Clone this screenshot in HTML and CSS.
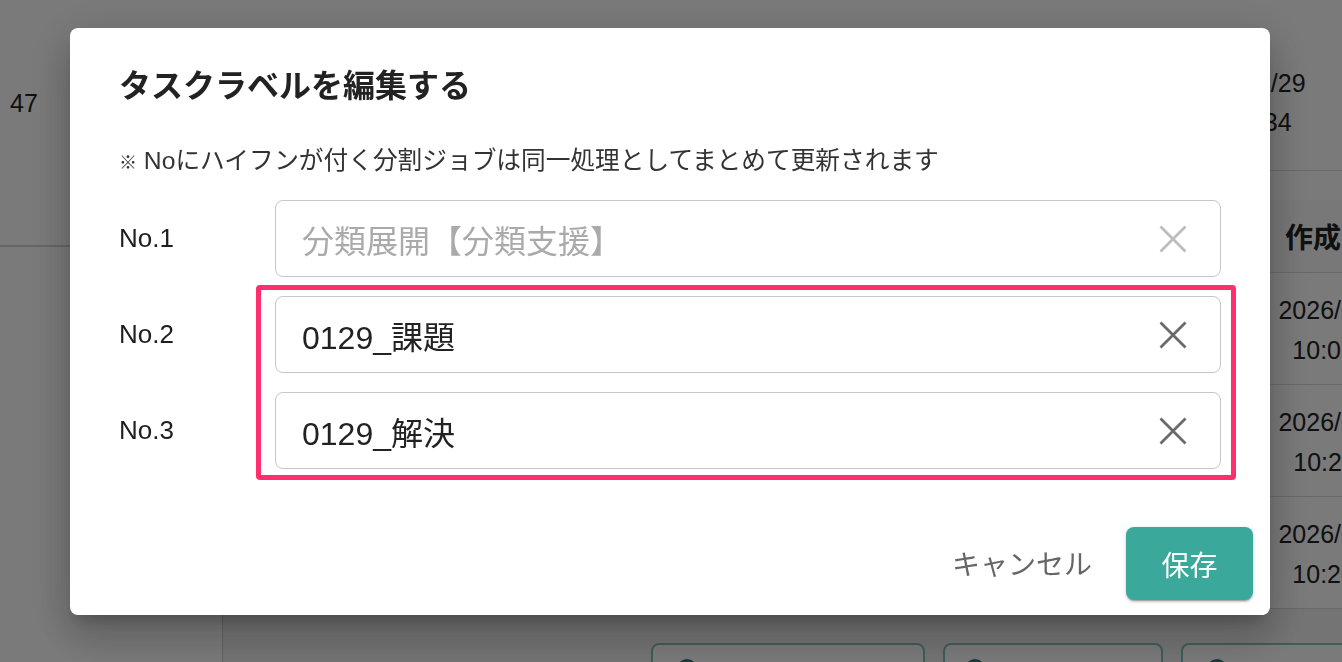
FILE: index.html
```html
<!DOCTYPE html>
<html lang="ja">
<head>
<meta charset="utf-8">
<title>タスクラベルを編集する</title>
<link rel="stylesheet" href="styles.css">
</head>
<body>
<div class="app">
  <aside class="sidebar">
    <div class="side-count">47</div>
    <div class="side-divider"></div>
  </aside>
  <main class="main">
    <section class="info">
      <div class="info-col">
        <div>2026/01/29</div>
        <div>10:05:34</div>
      </div>
    </section>
    <section class="table">
      <div class="table-toolbar"></div>
      <div class="trow thead">
        <div class="cell"></div>
        <div class="cell date-cell">作成日時</div>
      </div>
      <div class="trow">
        <div class="cell"></div>
        <div class="cell date-cell"><div>2026/01/29</div><div>10:05:34</div></div>
      </div>
      <div class="trow">
        <div class="cell"></div>
        <div class="cell date-cell"><div>2026/01/29</div><div>10:20:11</div></div>
      </div>
      <div class="trow">
        <div class="cell"></div>
        <div class="cell date-cell"><div>2026/01/29</div><div>10:20:48</div></div>
      </div>
    </section>
    <footer class="footer">
      <div class="obtn w1"><span class="dot"></span></div>
      <div class="obtn w2"><span class="dot"></span></div>
      <div class="obtn w3"><span class="dot"></span></div>
    </footer>
  </main>
</div>

<div class="overlay">
  <div class="modal" role="dialog">
    <h2 class="modal-title">タスクラベルを編集する</h2>
    <p class="note"><span class="mark">※</span> Noにハイフンが付く分割ジョブは同一処理としてまとめて更新されます</p>
    <div class="fields">
      <div class="row">
        <div class="label">No.1</div>
        <div class="input disabled">
          <span class="value placeholder">分類展開【分類支援】</span>
          <svg class="clear" width="28" height="28" viewBox="0 0 28 28"><path d="M1.5 1.5 L26.5 26.5 M26.5 1.5 L1.5 26.5"/></svg>
        </div>
      </div>
      <div class="group">
        <div class="row">
          <div class="label">No.2</div>
          <div class="input">
            <span class="value">0129_課題</span>
            <svg class="clear" width="28" height="28" viewBox="0 0 28 28"><path d="M1.5 1.5 L26.5 26.5 M26.5 1.5 L1.5 26.5"/></svg>
          </div>
        </div>
        <div class="row">
          <div class="label">No.3</div>
          <div class="input">
            <span class="value">0129_解決</span>
            <svg class="clear" width="28" height="28" viewBox="0 0 28 28"><path d="M1.5 1.5 L26.5 26.5 M26.5 1.5 L1.5 26.5"/></svg>
          </div>
        </div>
        <span class="highlight"></span>
      </div>
    </div>
    <div class="actions">
      <button class="btn-text">キャンセル</button>
      <button class="btn-save">保存</button>
    </div>
  </div>
</div>
</body>
</html>
```

FILE: styles.css
```css
* { box-sizing: border-box; }

html, body {
  margin: 0;
  padding: 0;
  width: 1342px;
  height: 662px;
  overflow: hidden;
  background: #ffffff;
  font-family: "Liberation Sans", "Noto Sans CJK JP", sans-serif;
  color: #222;
}

/* ---------- background page ---------- */
.app {
  display: grid;
  grid-template-columns: 222px 1fr;
  height: 662px;
}

.sidebar {
  background: #fff;
  display: flex;
  flex-direction: column;
}

.side-count {
  margin-top: 85px;
  padding-left: 10px;
  font-size: 25px;
  line-height: 36px;
  color: #222;
}

.side-divider {
  margin-top: 124px;
  border-bottom: 2px solid #d6d6d6;
}

.main {
  display: flex;
  flex-direction: column;
  overflow: hidden;
  min-width: 0;
}

.info {
  flex: none;
  height: 170px;
  display: flex;
  justify-content: flex-end;
  padding-top: 64px;
}

.info-col {
  width: 198px;
  text-align: center;
  font-size: 25px;
  line-height: 39px;
  color: #222;
}

.table {
  flex: none;
  width: 1196px;
  border-top: 1px solid #dcdcdc;
}

.table-toolbar {
  height: 29px;
}

.trow {
  display: grid;
  grid-template-columns: 1fr 154px;
  border-bottom: 1px solid #dcdcdc;
  height: 112px;
}

.trow.thead {
  height: 73px;
  background: #fafafa;
}

.cell {
  display: flex;
  flex-direction: column;
  align-items: center;
}

.date-cell {
  font-size: 25px;
  line-height: 40px;
  padding-top: 17px;
  color: #222;
  white-space: nowrap;
}

.thead .date-cell {
  justify-content: center;
  padding-top: 0;
  font-weight: 700;
  font-size: 28px;
  font-family: "Noto Sans CJK JP", sans-serif;
}

.footer {
  flex: 1;
  background: #f2f2f2;
  border-left: 1px solid #cfcfcf;
  display: flex;
  gap: 18px;
  padding-left: 428px;
  padding-top: 34px;
}

.obtn {
  flex: none;
  height: 50px;
  border: 2px solid #86c2b9;
  border-radius: 8px;
  background: #fff;
  padding: 14px 0 0 24px;
}

.obtn.w1 { width: 274px; }
.obtn.w2 { width: 220px; padding-left: 20px; }
.obtn.w3 { width: 260px; }

.dot {
  display: block;
  width: 20px;
  height: 20px;
  border-radius: 50%;
  background: #2f7f75;
}

/* ---------- overlay + modal ---------- */
.overlay {
  position: fixed;
  inset: 0;
  background: rgba(0, 0, 0, 0.52);
  display: flex;
  justify-content: flex-start;
  align-items: flex-start;
  padding: 28px 0 0 70px;
}

.modal {
  width: 1200px;
  background: #fff;
  border-radius: 8px;
  padding: 31px 49px 15px;
  display: flex;
  flex-direction: column;
  box-shadow:
    0 11px 15px -7px rgba(0, 0, 0, 0.2),
    0 24px 38px 3px rgba(0, 0, 0, 0.14),
    0 9px 46px 8px rgba(0, 0, 0, 0.12);
}

.modal-title {
  margin: 0;
  font-family: "Noto Sans CJK JP", sans-serif;
  font-size: 32px;
  font-weight: 700;
  line-height: 48px;
  color: #222;
}

.note {
  margin: 36px 0 0;
  font-family: "Liberation Sans", "Noto Sans CJK JP", sans-serif;
  font-size: 24.7px;
  line-height: 36px;
  color: #333;
}

.mark {
  font-family: "Noto Sans CJK JP", sans-serif;
  font-size: 18px;
}

.fields {
  margin-top: 21px;
  display: flex;
  flex-direction: column;
  gap: 19px;
}

.group {
  position: relative;
  display: flex;
  flex-direction: column;
  gap: 19px;
}

.row {
  display: grid;
  grid-template-columns: 156px 1fr;
  align-items: center;
}

.label {
  font-size: 26px;
  color: #1e1e1e;
}

.input {
  height: 77px;
  border: 1px solid #c6c6c6;
  border-radius: 8px;
  display: flex;
  align-items: center;
  padding: 0 33px 0 26px;
}

.value {
  flex: 1;
  font-size: 32px;
  color: #222;
  white-space: nowrap;
}

.value.placeholder {
  color: #aaaaaa;
}

.clear {
  flex: none;
  fill: none;
  stroke: #6a6a6a;
  stroke-width: 2.8;
}

.disabled .clear {
  stroke: #bdbdbd;
}

.highlight {
  position: absolute;
  top: -11px;
  bottom: -11px;
  left: 137px;
  right: -15px;
  border: 5px solid #ff2f6e;
  border-radius: 4px;
  pointer-events: none;
}

.actions {
  margin-top: 58px;
  margin-right: -32px;
  display: flex;
  justify-content: flex-end;
  align-items: center;
  gap: 18px;
}

.btn-text {
  border: none;
  background: transparent;
  font-family: "Noto Sans CJK JP", sans-serif;
  font-size: 28px;
  color: #666;
  padding: 0 16px;
  height: 73px;
  line-height: 73px;
  cursor: pointer;
}

.btn-save {
  border: none;
  background: #3aa99c;
  color: #fff;
  font-family: "Noto Sans CJK JP", sans-serif;
  font-size: 28px;
  width: 127px;
  height: 73px;
  border-radius: 8px;
  padding: 0;
  box-shadow:
    0 3px 1px -2px rgba(0, 0, 0, 0.2),
    0 2px 2px 0 rgba(0, 0, 0, 0.14),
    0 1px 5px 0 rgba(0, 0, 0, 0.12);
  cursor: pointer;
}
```
